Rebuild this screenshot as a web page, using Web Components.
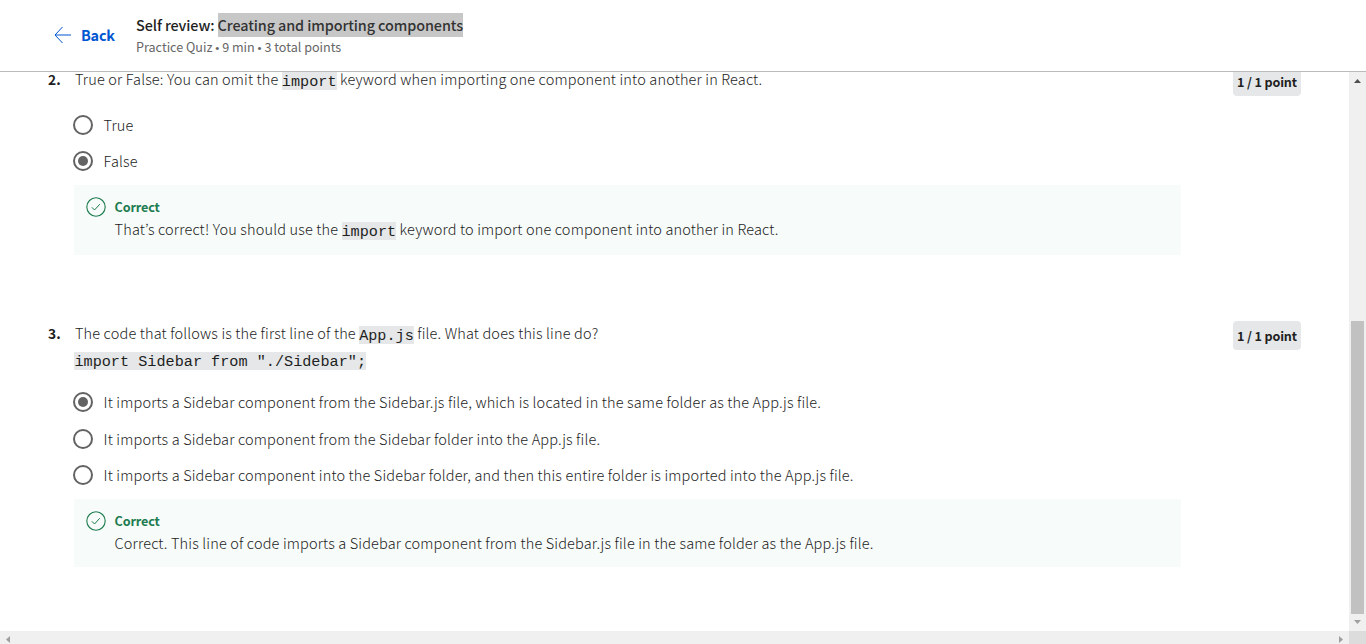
<!DOCTYPE html>
<html lang="en"><head><meta charset="utf-8"><title>Self review</title>
<style>
html,body{margin:0;height:100%;overflow:hidden;background:#fff}
body{font:300 14.5px/24px "Noto Sans CJK KR","Noto Sans CJK SC",sans-serif;letter-spacing:.155px;color:#1c1c1c}
</style></head><body>
<quiz-app></quiz-app>
<script>
const define=(name,html)=>customElements.define(name,class extends HTMLElement{
  constructor(){super();const t=document.createElement('template');t.innerHTML=html;this.attachShadow({mode:'open'}).append(t.content.cloneNode(true));}
  connectedCallback(){this.shadowRoot.querySelectorAll('[data-attr]').forEach(e=>e.textContent=this.getAttribute(e.dataset.attr)||'');}
});
define('code-chip',`<style>:host{display:inline-block;height:18px;vertical-align:top;margin-top:5px;background:#e5e7e8;font:400 15.2px/20px "Liberation Mono",monospace;letter-spacing:0;color:#1f1f1f;white-space:pre}
:host([block]){margin-top:4px}</style><slot></slot>`);
define('point-badge',`<style>:host{display:block;width:68px;height:29px;border-radius:4px;background:#e5e7e8;text-align:center;font-size:12.6px;font-weight:700;line-height:29px;letter-spacing:-.15px;white-space:nowrap;color:#1f1f1f}
:host([docked]){height:24px;margin-top:5px;line-height:19px;border-radius:0 0 4px 4px}</style><slot></slot>`);
define('radio-option',`<style>
:host{display:flex;align-items:center;height:24px;gap:10.600px;white-space:nowrap}
i{box-sizing:border-box;width:20px;height:20px;border:2px solid #636363;border-radius:50%;display:grid;place-items:center;flex:none}
:host([checked]) i::after{content:"";width:10px;height:10px;border-radius:50%;background:#636363}
</style><i></i><span><slot></slot></span>`);
define('feedback-box',`<style>
:host{display:flex;box-sizing:border-box;width:1107px;padding:12px 0 0 12px;gap:8.600px;background:#f7fbf9;white-space:nowrap}
svg{flex:none;width:20px;height:20px}
b{display:block;font-size:12.6px;line-height:20px;font-weight:700;letter-spacing:-.13px;color:#1d7c50}
p{margin:0;line-height:24px}
</style><svg viewBox="0 0 20 20" fill="none" stroke="#1d7c50"><circle cx="10" cy="10" r="9.2" stroke-width="1.1"/><path d="M5.800 10.300l2.700 2.700 5.300-5.800" stroke-width="1"/></svg><div><b>Correct</b><p><slot></slot></p></div>`);
define('quiz-question',`<style>
:host{display:grid;grid-template-columns:27px 1fr 68px;padding:0 48px;white-space:nowrap}
b{font-size:13.8px;font-weight:700;line-height:24px;letter-spacing:.1px;color:#1f1f1f}
</style><b data-attr="number"></b><div><slot></slot></div><slot name="points"></slot>`);
define('quiz-header',`<style>
:host{display:flex;box-sizing:border-box;height:72px;border-bottom:1px solid #bbb;padding-left:54px;white-space:nowrap}
svg{width:18px;height:18px;margin-top:26px;flex:none}
.back{width:55px;margin-left:9px;font-size:14.4px;font-weight:700;line-height:70px;letter-spacing:-.2px;color:#0056d2}
h1{margin:13px 0 0;font-size:14.4px;font-weight:500;line-height:24px;letter-spacing:-.1px;color:#1f1f1f}
mark{display:inline-block;height:24px;background:#c7c7c7;color:#333}
p{margin:1px 0 0;font-size:12.6px;line-height:18px;letter-spacing:0;color:#666;font-weight:400}
i{font:400 11.500px/1 "Liberation Sans",sans-serif}
</style><svg viewBox="0 0 18 18" fill="none" stroke="#0056d2"><path d="M17 9H1M8.5 1L1 9l7.500 8"/></svg><span class="back">Back</span><div><h1>Self review: <mark>Creating and importing components</mark></h1><p>Practice Quiz <i>•</i> 9 min <i>•</i> 3 total points</p></div>`);
define('scroll-bars',`<style>
:host{display:grid;grid-template-rows:1fr 13px;width:17px;background:#f0f0f0}
.v{display:flex;flex-direction:column;align-items:center;box-sizing:border-box;padding:7px 0 7px}
.v span{width:13px;height:293px;background:#c1c1c1;margin-top:auto;margin-bottom:6px}
svg{width:7px;height:4px;flex:none}
.c{background:#dcdcdc}
</style><div class="v"><svg viewBox="0 0 7 4"><path d="M0 4L3.500 0 7 4z" fill="#505050"/></svg><span></span><svg viewBox="0 0 7 4"><path d="M0 0L3.500 4 7 0z" fill="#a0a0a0"/></svg></div><div class="c"></div>`);
define('bottom-scroll',`<style>:host{display:flex;justify-content:space-between;align-items:center;box-sizing:border-box;height:13px;padding:4px 6px 0;background:#f0f0f0}svg{width:4px;height:7px}</style>
<svg viewBox="0 0 4 7"><path d="M4 0L0 3.500 4 7z" fill="#a0a0a0"/></svg><svg viewBox="0 0 4 7"><path d="M0 0L4 3.500 0 7z" fill="#a0a0a0"/></svg>`);
define('quiz-app',`<style>
:host{display:grid;grid-template-rows:72px 572px;width:1366px;height:644px}
.body{display:grid;grid-template-columns:1349px 17px}
.main{display:grid;grid-template-rows:559px 13px}
.q{height:24px}
radio-option{margin-left:-2px}
feedback-box{margin-left:-1px}
</style><quiz-header></quiz-header><div class="body"><div class="main"><div class="content">
<quiz-question number="2." style="height:258px;margin-top:-5px"><div class="q">True or False: You can omit the <code-chip>import</code-chip> keyword when importing one component into another in React.</div>
<radio-option style="margin-top:22px">True</radio-option><radio-option checked style="margin-top:12px">False</radio-option>
<feedback-box style="margin-top:12px;height:70px">That’s correct! You should use the <code-chip>import</code-chip> keyword to import one component into another in React.</feedback-box><point-badge slot="points" docked>1 / 1 point</point-badge></quiz-question>
<quiz-question number="3." style="margin-top:-4px"><div class="q">The code that follows is the first line of the <code-chip>App.js</code-chip> file. What does this line do?</div><div class="q" style="margin:3px 0 0 -.6px"><code-chip block>import Sidebar from "./Sidebar";</code-chip></div>
<radio-option checked style="margin-top:18px">It imports a Sidebar component from the Sidebar.js file, which is located in the same folder as the App.js file.</radio-option>
<radio-option style="margin-top:13px">It imports a Sidebar component from the Sidebar folder into the App.js file.</radio-option>
<radio-option style="margin-top:12px">It imports a Sidebar component into the Sidebar folder, and then this entire folder is imported into the App.js file.</radio-option>
<feedback-box style="margin-top:12px;height:68px">Correct. This line of code imports a Sidebar component from the Sidebar.js file in the same folder as the App.js file.</feedback-box><point-badge slot="points">1 / 1 point</point-badge></quiz-question>
</div><bottom-scroll></bottom-scroll></div><scroll-bars></scroll-bars></div>`);
</script></body></html>
